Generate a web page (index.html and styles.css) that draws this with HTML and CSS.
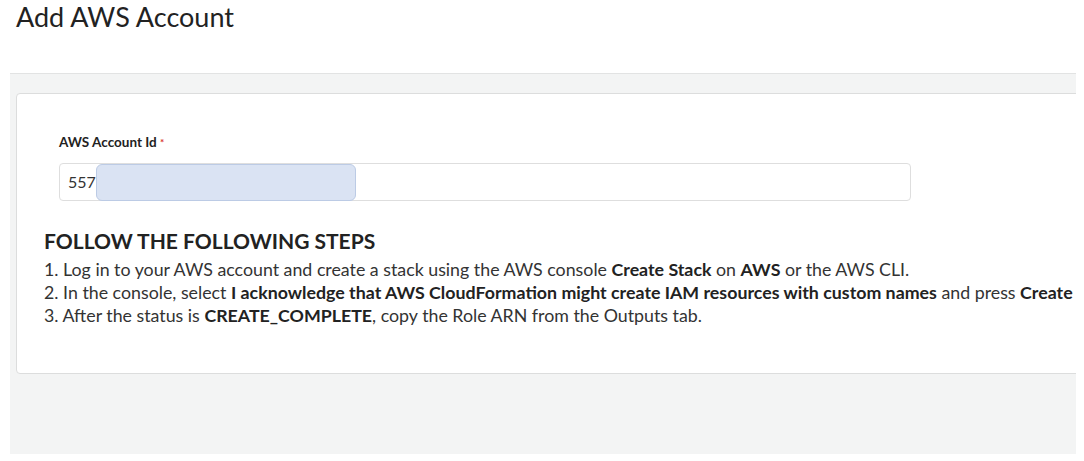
FILE: index.html
```html
<!DOCTYPE html>
<html>
<head>
<meta charset="utf-8">
<link rel="stylesheet" href="styles.css">
</head>
<body>
<h1 class="title">Add AWS Account</h1>
<div class="panel">
  <div class="card">
    <div class="field">
      <label class="label">AWS Account Id <span class="req">*</span></label>
      <div class="input-wrap">
        <div class="input">557</div>
        <div class="redact"></div>
      </div>
    </div>
    <div class="steps">
      <h2 class="steps-title">FOLLOW THE FOLLOWING STEPS</h2>
      <p class="step">1. Log in to your AWS account and create a stack using the AWS console <b>Create Stack</b> on <b>AWS</b> or the AWS CLI.</p>
      <p class="step">2. In the console, select <b>I acknowledge that AWS CloudFormation might create IAM resources with custom names</b> and press <b>Create Stack</b>.</p>
      <p class="step">3. After the status is <b>CREATE_COMPLETE</b>, copy the Role ARN from the Outputs tab.</p>
    </div>
  </div>
</div>
</body>
</html>
```

FILE: styles.css
```css
html, body {
  margin: 0;
  padding: 0;
  background: #ffffff;
  font-family: Lato, "Open Sans", sans-serif;
  color: #333;
  overflow: hidden;
}

.title {
  margin: 0;
  padding: 2px 0 0 16px;
  height: 70px;
  box-sizing: border-box;
  font-size: 27px;
  font-weight: 400;
  color: #222;
  line-height: 30px;
}

.panel {
  margin: 3px 0 0 10px;
  width: 1066px;
  height: 381px;
  box-sizing: border-box;
  border-top: 1px solid #e2e3e3;
  background: #f3f4f4;
  overflow: hidden;
  padding: 19px 0 0 6px;
}

.card {
  width: 1120px;
  height: 281px;
  box-sizing: border-box;
  background: #fff;
  border: 1px solid #dcdddd;
  border-radius: 4px;
  padding: 40px 0 0 0;
}

.field {
  padding-left: 42px;
}

.label {
  display: block;
  font-size: 13.5px;
  font-weight: 700;
  color: #222;
  line-height: 16px;
  margin-bottom: 13px;
}

.req {
  color: #d9302c;
  font-size: 10px;
  vertical-align: top;
}

.input-wrap {
  position: relative;
  width: 852px;
}

.input {
  height: 38px;
  box-sizing: border-box;
  border: 1px solid #dedede;
  border-radius: 4px;
  padding: 0 8px;
  font-size: 16px;
  line-height: 36px;
  color: #333;
}

.redact {
  position: absolute;
  left: 37px;
  top: 1px;
  width: 260px;
  height: 37px;
  box-sizing: border-box;
  background: #dae3f3;
  border: 1px solid #bccbe5;
  border-radius: 6px;
}

.steps {
  padding-left: 27px;
  padding-top: 28px;
  white-space: nowrap;
}

.steps-title {
  margin: 0 0 5px 0;
  font-size: 21px;
  font-weight: 700;
  line-height: 24px;
  color: #222;
}

.step {
  margin: 0;
  font-size: 17.8px;
  line-height: 23px;
  color: #333;
}

.step b {
  font-weight: 700;
  color: #222;
}
```
